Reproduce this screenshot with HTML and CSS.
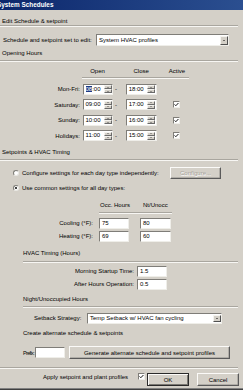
FILE: index.html
```html
<!DOCTYPE html>
<html>
<head>
<meta charset="utf-8">
<link rel="stylesheet" href="styles.css">
</head>
<body>
<div class="win">
  <div class="titlebar"><span class="title">System Schedules</span></div>

  <div class="gh gh-top">Edit Schedule &amp; setpoint</div>
  <div class="sep sep-top"></div>
  <div class="row sched-row">
    <span class="sched-lbl">Schedule and setpoint set to edit:</span>
    <div class="select sched-select"><span class="select-text">System HVAC profiles</span><span class="drop"><i class="tri-dn"></i></span></div>
  </div>

  <div class="gh gh-open">Opening Hours</div>
  <div class="sep sep-open"></div>
  <div class="hours-head"><span class="hh-open">Open</span><span class="hh-close">Close</span><span class="hh-active">Active</span></div>
  <div class="hours">
    <div class="hrow">
      <span class="day">Mon-Fri:</span>
      <div class="time t-open"><span class="tval"><span class="hl">08</span>:00</span><span class="spin"><span class="sb"><i class="tri-up"></i></span><span class="sb"><i class="tri-dn"></i></span></span></div>
      <span class="dash">-</span>
      <div class="time t-close"><span class="tval">18:00</span><span class="spin"><span class="sb"><i class="tri-up"></i></span><span class="sb"><i class="tri-dn"></i></span></span></div>
    </div>
    <div class="hrow">
      <span class="day">Saturday:</span>
      <div class="time t-open"><span class="tval">09:00</span><span class="spin"><span class="sb"><i class="tri-up"></i></span><span class="sb"><i class="tri-dn"></i></span></span></div>
      <span class="dash">-</span>
      <div class="time t-close"><span class="tval">17:00</span><span class="spin"><span class="sb"><i class="tri-up"></i></span><span class="sb"><i class="tri-dn"></i></span></span></div>
      <span class="chk hchk"><svg viewBox="0 0 7 7" width="5" height="5"><path d="M0.8 3.4 L2.6 5.2 L6.2 1.4" fill="none" stroke="#000" stroke-width="1.3"/></svg></span>
    </div>
    <div class="hrow">
      <span class="day">Sunday:</span>
      <div class="time t-open"><span class="tval">10:00</span><span class="spin"><span class="sb"><i class="tri-up"></i></span><span class="sb"><i class="tri-dn"></i></span></span></div>
      <span class="dash">-</span>
      <div class="time t-close"><span class="tval">16:00</span><span class="spin"><span class="sb"><i class="tri-up"></i></span><span class="sb"><i class="tri-dn"></i></span></span></div>
      <span class="chk hchk"><svg viewBox="0 0 7 7" width="5" height="5"><path d="M0.8 3.4 L2.6 5.2 L6.2 1.4" fill="none" stroke="#000" stroke-width="1.3"/></svg></span>
    </div>
    <div class="hrow">
      <span class="day">Holidays:</span>
      <div class="time t-open"><span class="tval">11:00</span><span class="spin"><span class="sb"><i class="tri-up"></i></span><span class="sb"><i class="tri-dn"></i></span></span></div>
      <span class="dash">-</span>
      <div class="time t-close"><span class="tval">15:00</span><span class="spin"><span class="sb"><i class="tri-up"></i></span><span class="sb"><i class="tri-dn"></i></span></span></div>
      <span class="chk hchk"><svg viewBox="0 0 7 7" width="5" height="5"><path d="M0.8 3.4 L2.6 5.2 L6.2 1.4" fill="none" stroke="#000" stroke-width="1.3"/></svg></span>
    </div>
  </div>

  <div class="gh gh-set">Setpoints &amp; HVAC Timing</div>
  <div class="sep sep-set"></div>
  <div class="row radio-row1">
    <span class="radio"></span>
    <span class="radio-lbl">Configure settings for each day type independently:</span>
    <span class="btn btn-disabled btn-config">Configure...</span>
  </div>
  <div class="row radio-row2">
    <span class="radio on"><i class="dot"></i></span>
    <span class="radio-lbl">Use common settings for all day types:</span>
  </div>
  <div class="occ-head"><span class="oh1">Occ. Hours</span><span class="oh2">Nt/Unocc</span></div>
  <div class="row sp-row sp-cool">
    <span class="sp-lbl">Cooling (°F):</span>
    <span class="field f1">75</span>
    <span class="field f2">80</span>
  </div>
  <div class="row sp-row sp-heat">
    <span class="sp-lbl">Heating (°F):</span>
    <span class="field f1">69</span>
    <span class="field f2">60</span>
  </div>

  <div class="gh gh-sub gh-hvac">HVAC Timing (Hours)</div>
  <div class="sep sep-sub sep-hvac"></div>
  <div class="row tm-row tm-1">
    <span class="tm-lbl">Morning Startup Time:</span>
    <span class="field tm-f">1.5</span>
  </div>
  <div class="row tm-row tm-2">
    <span class="tm-lbl">After Hours Operation:</span>
    <span class="field tm-f">0.5</span>
  </div>

  <div class="gh gh-sub gh-night">Night/Unoccupied Hours</div>
  <div class="sep sep-sub sep-night"></div>
  <div class="row sb-row">
    <span class="sb-lbl">Setback Strategy:</span>
    <div class="select sb-select"><span class="select-text">Temp Setback w/ HVAC fan cycling</span><span class="drop"><i class="tri-dn"></i></span></div>
  </div>

  <div class="gh gh-sub gh-create">Create alternate schedule &amp; setpoints</div>
  <div class="row px-row">
    <span class="px-lbl">Prefix:</span>
    <span class="field px-f"></span>
    <span class="btn btn-gen">Generate alternate schedule and setpoint profiles</span>
  </div>

  <div class="sep sep-bottom"></div>
  <div class="row bottom-row">
    <span class="apply-lbl">Apply setpoint and plant profiles</span>
    <span class="chk apply-chk"><svg viewBox="0 0 7 7" width="5" height="5"><path d="M0.8 3.4 L2.6 5.2 L6.2 1.4" fill="none" stroke="#000" stroke-width="1.3"/></svg></span>
    <span class="btn btn-default btn-ok">OK</span>
    <span class="btn btn-cancel">Cancel</span>
  </div>
</div>
</body>
</html>
```
FILE: styles.css
```css
html, body {
  margin: 0;
  padding: 0;
  background: #d4d0c8;
}
body {
  font-family: "Liberation Sans", Arial, sans-serif;
  font-size: 6px;
  color: #000;
}
.win {
  width: 243px;
  height: 390px;
  overflow: hidden;
  box-shadow: inset 0 -1px 0 #404040, inset 0 -2px 0 #808080;
  white-space: nowrap;
}
.titlebar {
  height: 10px;
  background: linear-gradient(90deg, #0c276c, #2b4f90);
  color: #fff;
  font-weight: bold;
  font-size: 6.4px;
  line-height: 10px;
  overflow: hidden;
}
.title {
  display: inline-block;
  margin-left: -3px;
}
.gh {
  height: 7px;
  line-height: 7px;
}
.gh-top, .gh-open, .gh-set { padding-left: 2px; }
.gh-top { margin-top: 7.5px; }
.gh-open { margin-top: 3.5px; }
.gh-set { margin-top: 7.5px; }
.gh-sub { margin-left: 23px; }
.gh-hvac { margin-top: 8px; }
.gh-night { margin-top: 6px; }
.gh-create { margin-top: 6px; }

.sep {
  border-top: 1px solid #a9a69f;
  border-bottom: 1px solid #f7f6f3;
  margin-right: 5px;
}
.sep-top { margin-top: 0.5px; }
.sep-open { margin-top: 3.5px; }
.sep-set { margin-top: 3.5px; }
.sep-sub { margin-left: 23px; }
.sep-hvac { margin-top: 4px; }
.sep-night { margin-top: 3px; }
.sep-bottom { margin-top: 7.5px; }

.row {
  display: flex;
  align-items: center;
}

/* inputs & selects */
.select, .field, .time {
  box-sizing: border-box;
  background: #fff;
  border: 1px solid;
  border-color: #7f7d78 #efeee9 #efeee9 #7f7d78;
}
.select {
  display: flex;
  align-items: center;
}
.select-text {
  flex: 1;
  padding-left: 2px;
  overflow: hidden;
}
.drop {
  box-sizing: border-box;
  width: 8px;
  align-self: stretch;
  margin: 0.5px;
  background: #d4d0c8;
  border: 1px solid;
  border-color: #f4f3ef #505050 #505050 #f4f3ef;
  display: flex;
  align-items: center;
  justify-content: center;
}
.tri-dn, .tri-up {
  display: block;
  width: 0;
  height: 0;
  border-left: 1.6px solid transparent;
  border-right: 1.6px solid transparent;
}
.tri-dn { border-top: 1.6px solid #000; }
.tri-up { border-bottom: 1.6px solid #000; }
.spin .tri-dn { border-top-color: #555; border-left-width: 1.2px; border-right-width: 1.2px; border-top-width: 1.2px; }
.spin .tri-up { border-bottom-color: #555; border-left-width: 1.2px; border-right-width: 1.2px; border-bottom-width: 1.2px; }

.field {
  display: block;
  padding-left: 2px;
  line-height: 8.5px;
}

/* schedule selector */
.sched-row { margin-top: 7px; height: 12px; }
.sched-lbl { width: 93px; padding-left: 3px; }
.sched-select { width: 133px; height: 12px; }

/* opening hours */
.hours-head {
  margin-top: 5.5px;
  margin-left: 82px;
  width: 107px;
  display: flex;
  height: 7px;
  line-height: 7px;
  padding-bottom: 2.5px;
  border-bottom: 1px solid #a9a69f;
  box-shadow: 0 1px 0 #f7f6f3;
}
.hh-open { width: 31px; text-align: center; }
.hh-close { margin-left: 12.7px; width: 31px; text-align: center; }
.hh-active { margin-left: 8.3px; width: 24px; text-align: center; }

.hours { margin-top: 5.5px; }
.hrow {
  display: flex;
  align-items: center;
  height: 11px;
}
.hrow + .hrow { margin-top: 4.5px; }
.day { width: 80px; text-align: right; }
.time {
  height: 11px;
  display: flex;
  align-items: stretch;
}
.t-open { margin-left: 2.5px; width: 30.5px; }
.t-close { width: 31px; }
.tval {
  flex: 1;
  padding-left: 2px;
  line-height: 9px;
}
.hl {
  background: #1d3a85;
  color: #fff;
}
.spin {
  width: 8px;
  display: flex;
  flex-direction: column;
  margin: 0.5px;
}
.sb {
  flex: 1;
  box-sizing: border-box;
  background: #d4d0c8;
  border: 0.5px solid;
  border-color: #f4f3ef #6a6a6a #6a6a6a #f4f3ef;
  display: flex;
  align-items: center;
  justify-content: center;
}
.dash {
  width: 12.7px;
  padding-left: 2px;
  box-sizing: border-box;
}
.chk {
  box-sizing: border-box;
  width: 7px;
  height: 7px;
  background: #fff;
  border: 1px solid;
  border-color: #7f7d78 #efeee9 #efeee9 #7f7d78;
  display: flex;
  align-items: center;
  justify-content: center;
}
.hchk { margin-left: 16.5px; }

/* radios */
.radio-row1 { margin-top: 6px; height: 12px; }
.radio-row2 { margin-top: 5.5px; height: 7px; }
.radio {
  box-sizing: border-box;
  width: 6px;
  height: 6px;
  margin-left: 13px;
  border-radius: 50%;
  background: #fff;
  border: 1px solid;
  border-color: #7f7d78 #e9e8e4 #e9e8e4 #7f7d78;
  display: flex;
  align-items: center;
  justify-content: center;
}
.dot {
  display: block;
  width: 2px;
  height: 2px;
  border-radius: 50%;
  background: #000;
}
.radio-lbl { margin-left: 3px; }
.radio-row1 .radio-lbl { width: 148px; }

/* buttons */
.btn {
  box-sizing: border-box;
  display: flex;
  align-items: center;
  justify-content: center;
  background: #d4d0c8;
  border: 1px solid;
  border-color: #fbfaf8 #5a5a5a #5a5a5a #fbfaf8;
  box-shadow: inset -0.5px -0.5px 0 #8c8a85;
}
.btn-disabled {
  color: #a6a39c;
  text-shadow: 0.5px 0.5px 0 #fff;
}
.btn-config { width: 51px; height: 12px; }
.btn-gen { margin-left: 4px; width: 161px; height: 13px; }
.btn-default {
  border-color: #2a2a2a;
  box-shadow: inset 1px 1px 0 #fbfaf8, inset -1px -1px 0 #7a7873;
}
.btn-ok { margin-left: 2px; width: 42px; height: 13px; }
.btn-cancel { margin-left: 8px; width: 42px; height: 13px; }

/* setpoints */
.occ-head {
  margin-top: 10px;
  margin-left: 99px;
  width: 73px;
  display: flex;
  height: 7px;
  line-height: 7px;
  padding-bottom: 3.5px;
  border-bottom: 1px solid #a9a69f;
  box-shadow: 0 1px 0 #f7f6f3;
}
.oh1 { width: 43px; padding-left: 1px; box-sizing: border-box; }
.oh2 { width: 30px; padding-left: 1px; box-sizing: border-box; }
.sp-row { height: 10.5px; }
.sp-cool { margin-top: 5px; }
.sp-heat { margin-top: 2.5px; }
.sp-lbl { width: 93px; text-align: right; }
.sp-row .field { height: 10.5px; }
.f1 { margin-left: 6px; width: 30px; }
.f2 { margin-left: 11px; width: 31px; }

/* timing */
.tm-row { height: 10.5px; }
.tm-1 { margin-top: 3.5px; }
.tm-2 { margin-top: 2.5px; }
.tm-lbl { width: 134px; text-align: right; }
.tm-f { margin-left: 3px; width: 30px; height: 10.5px; }

/* setback */
.sb-row { margin-top: 5.5px; height: 10.5px; }
.sb-lbl { margin-left: 34px; width: 53px; }
.sb-select { width: 135px; height: 10.5px; }

/* prefix */
.px-row { margin-top: 9.5px; height: 13px; }
.px-lbl {
  margin-left: 23px;
  width: 12px;
  font-size: 5.4px;
  letter-spacing: -0.6px;
}
.px-f { width: 30px; height: 11px; }

/* bottom */
.bottom-row {
  margin-top: 4.5px;
  height: 13px;
  align-items: flex-start;
}
.apply-lbl {
  margin-left: 43px;
  width: 95px;
  line-height: 7px;
  margin-top: 0.5px;
}
.apply-chk { margin-top: 0; }
```
